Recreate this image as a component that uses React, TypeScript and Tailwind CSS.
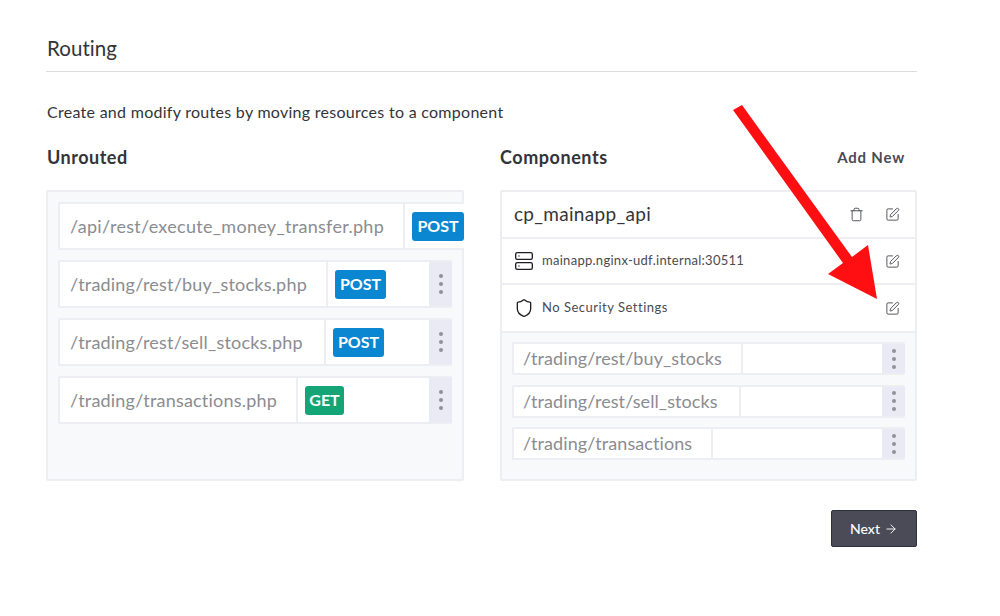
import { Server, Shield, SquarePen, Trash, ArrowRight } from "lucide-react";

const font = "font-['Lato','Liberation_Sans',sans-serif]";

function Dots() {
  return (
    <div className="flex h-full w-[23px] shrink-0 flex-col items-center justify-center gap-[4px] bg-[#e9eaf3]">
      <span className="size-[4px] rounded-full bg-[#8f919c]" />
      <span className="size-[4px] rounded-full bg-[#8f919c]" />
      <span className="size-[4px] rounded-full bg-[#8f919c]" />
    </div>
  );
}

function Badge({ label, width }: { label: string; width: string }) {
  const color = label === "GET" ? "bg-[#14a577]" : "bg-[#0b86d0]";
  return (
    <span className={`flex h-[29px] items-center justify-center rounded-[3px] text-[16px] font-bold text-white ${color} ${width}`}>
      {label}
    </span>
  );
}

function UnroutedRow({ path, cell, label, badge }: { path: string; cell: string; label: string; badge: string }) {
  return (
    <div className="flex h-[48px] w-[394px] items-stretch rounded-[2px] border-2 border-r-0 border-[#eceef4] bg-white">
      <div className={`flex items-center border-r-2 border-[#eceef4] pl-[10px] text-[18px] tracking-[0.2px] text-[#8b8c91] ${cell}`}>{path}</div>
      <div className="flex flex-1 items-center pl-[7px]">
        <Badge label={label} width={badge} />
      </div>
      <Dots />
    </div>
  );
}

function RouteRow({ path, cell }: { path: string; cell: string }) {
  return (
    <div className="flex h-[33px] w-[393px] items-stretch rounded-[2px] border-2 border-r-0 border-[#eceef4] bg-white">
      <div className={`flex items-center border-r-2 border-[#eceef4] pl-[9px] text-[18px] tracking-[0.08px] text-[#8b8c91] ${cell}`}>{path}</div>
      <div className="flex-1" />
      <Dots />
    </div>
  );
}

function Edit() {
  return <SquarePen size={15} strokeWidth={1.4} className="text-[#3f4048]" />;
}

export default function App() {
  return (
    <div className={`relative h-[616px] w-[1000px] overflow-hidden bg-white pl-[46px] pr-[83px] pt-[37px] ${font}`}>
      <div className="h-[35px] border-b border-[#dcdde0] pl-px text-[20.5px] leading-[22px] tracking-[0.05px] text-[#33343a]">Routing</div>
      <p className="mt-[30px] pl-px text-[16px] leading-[20px] tracking-[0.28px] text-[#33343a]">
        Create and modify routes by moving resources to a component
      </p>
      <div className="mt-[23px] grid grid-cols-[418px_417px] gap-x-[36px]">
        <div className="flex h-[24px] items-center pl-px text-[18px] font-bold tracking-[0.5px] text-[#33343a]">Unrouted</div>
        <div className="flex h-[24px] items-center justify-between pr-[12px] text-[18px] font-bold tracking-[0.55px] text-[#33343a]">
          <span>Components</span>
          <span className="text-[15px] font-bold tracking-[0.8px] text-[#4a4b55]">Add New</span>
        </div>

        <div className="mt-[21px] flex h-[291px] flex-col gap-[10px] rounded-[2px] border-2 border-[#eceef2] bg-[#f8f9fb] p-[10px]">
          <div className="flex h-[48px] w-[406px] shrink-0 items-stretch overflow-hidden border-2 border-r-0 border-[#eceef4] bg-white">
            <div className="flex w-[345px] shrink-0 items-center border-r-2 border-[#eceef4] pl-[10px] text-[18px] tracking-[0.3px] text-[#8b8c91]">/api/rest/execute_money_transfer.php</div>
            <div className="flex flex-1 items-center pl-[7px]">
              <Badge label="POST" width="w-[52px]" />
            </div>
          </div>
          <UnroutedRow path="/trading/rest/buy_stocks.php" cell="w-[268px]" label="POST" badge="w-[51px]" />
          <UnroutedRow path="/trading/rest/sell_stocks.php" cell="w-[266px]" label="POST" badge="w-[51px]" />
          <UnroutedRow path="/trading/transactions.php" cell="w-[238px]" label="GET" badge="w-[39px]" />
        </div>

        <div className="mt-[21px] flex h-[291px] flex-col rounded-[2px] border-2 border-[#eceef2] bg-[#f8f9fb]">
          <div className="flex h-[47px] items-center justify-between border-b-2 border-[#eceef2] bg-white pl-[12px] pr-[15px] text-[19px] tracking-[0.3px] text-[#33343a]">
            <span>cp_mainapp_api</span>
            <span className="flex items-center gap-[21px]">
              <Trash size={15} strokeWidth={1.4} className="text-[#3f4048]" />
              <Edit />
            </span>
          </div>
          <div className="flex h-[46px] items-center justify-between border-b-2 border-[#eceef2] bg-white pl-[12px] pr-[15px]">
            <span className="flex items-center gap-[8px] text-[13px] tracking-[0.28px] text-[#4a4b52]">
              <Server size={20} strokeWidth={1.6} className="text-[#1e1f26]" />
              mainapp.nginx-udf.internal:30511
            </span>
            <Edit />
          </div>
          <div className="flex h-[48px] items-center justify-between border-b-2 border-[#eceef2] bg-white pl-[12px] pr-[15px]">
            <span className="flex items-center gap-[8px] text-[13px] tracking-[0.5px] text-[#4a4b52]">
              <Shield size={20} strokeWidth={1.6} className="text-[#1e1f26]" />
              No Security Settings
            </span>
            <Edit />
          </div>
          <div className="flex flex-col gap-[9.5px] px-[10px] pt-[9px]">
            <RouteRow path="/trading/rest/buy_stocks" cell="w-[229px]" />
            <RouteRow path="/trading/rest/sell_stocks" cell="w-[227px]" />
            <RouteRow path="/trading/transactions" cell="w-[199px]" />
          </div>
        </div>
      </div>
      <div className="mt-[29px] flex justify-end">
        <button className="flex h-[37px] w-[86px] items-center justify-center gap-[4px] rounded-[2px] border border-[#2e3040] bg-[#4a4b57] text-[14px] font-medium text-white">
          Next
          <ArrowRight size={14} strokeWidth={1.6} />
        </button>
      </div>
      <svg className="absolute left-0 top-0 pointer-events-none" width="1000" height="616" viewBox="0 0 1000 616">
        <polygon points="733,110 742,105 852,257 868,245 877,299 828,274 843,263" fill="#ff0e12" />
      </svg>
    </div>
  );
}
